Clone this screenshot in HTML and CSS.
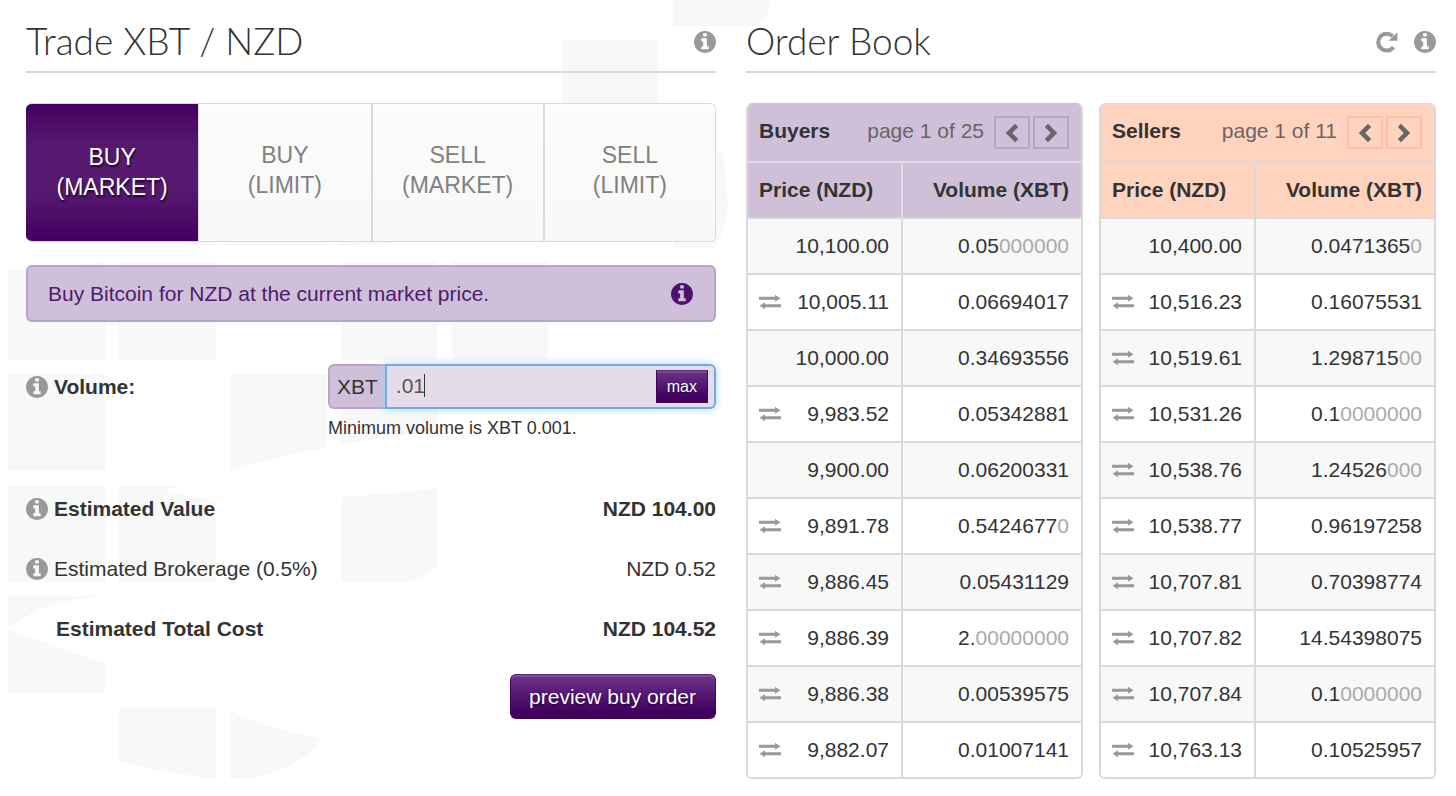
FILE: index.html
```html
<!DOCTYPE html>
<html lang="en">
<head>
<meta charset="utf-8">
<meta name="viewport" content="width=device-width, initial-scale=1">
<title>Trade XBT / NZD</title>
<link rel="stylesheet" href="styles.css">
</head>
<body>
<svg class="sprite" aria-hidden="true">
  <symbol id="info" viewBox="0 128 1536 1536"><path d="M1024 1376v-160q0-14-9-23t-23-9h-96V672q0-14-9-23t-23-9H544q-14 0-23 9t-9 23v160q0 14 9 23t23 9h96v320h-96q-14 0-23 9t-9 23v160q0 14 9 23t23 9h448q14 0 23-9t9-23zm-128-896V320q0-14-9-23t-23-9H672q-14 0-23 9t-9 23v160q0 14 9 23t23 9h192q14 0 23-9t9-23zm640 416q0 209-103 385.5T1153.5 1561 768 1664t-385.5-103T103 1281.5 0 896t103-385.5T382.5 231 768 128t385.5 103T1433 510.5 1536 896z"/></symbol>
  <symbol id="reload" viewBox="0 0 22 22"><path d="M17.4 16.2A8.4 8.4 0 1 1 16.6 5.2" fill="none" stroke="#999" stroke-width="4"/><path d="M21.4 1.2v8.6h-9z"/></symbol>
  <symbol id="swap" viewBox="0 0 22 16"><path d="M0 2.8h16V.8l5.5 3.5L16 7.8v-2H0zM22 10.2H6v-2L.5 11.7 6 15.2v-2h16z"/></symbol>
  <symbol id="prev" viewBox="0 0 14 20"><path d="M10 0.8 13.2 4 7.2 10l6 6L10 19.2.8 10z"/></symbol>
  <symbol id="next" viewBox="0 0 14 20"><path d="M4 .8.8 4l6 6-6 6L4 19.2l9.2-9.2z"/></symbol>
</svg>

<svg class="backdrop" width="780" height="796" viewBox="0 0 780 796" aria-hidden="true">
  <path d="M673 0h97q0 16-12 26h-85z"/>
  <path d="M562 40h96v96h-96z"/>
  <path d="M119 151h97v94h-97zM230 151h97v94h-97zM341 151h70v89q-30 5-70 5zM673 151h50l5 54q-2 24-13 43h-42z"/>
  <path d="M8 271l97-9v98H8zM119 262h97v98h-97zM341 262h96v98h-96zM452 262h96v98h-96z"/>
  <path d="M8 374h97v97H8zM230 374h97v73q-50 9-97 24zM341 374h96v58q-50 4-96 13z"/>
  <path d="M8 486h97v96H8zM119 486h65q-12 1-20 5l52 10v81h-97zM341 497q50-3 96-9v79q-14 12-34 15h-62z"/>
  <path d="M8 596h97q-60 4-90 28l-7 3zM8 629l97 35v29H8z"/>
  <path d="M119 708h97v71q-50-6-97-18zM230 711q46 21 92 27-30 41-92 41z"/>
</svg>

<main class="page">
  <section class="panel">
    <header class="panel-head">
      <h1>Trade XBT / NZD</h1>
      <button class="icon-btn" type="button" aria-label="About trading"><svg class="icon"><use href="#info"/></svg></button>
    </header>

    <div class="tabs">
      <button class="tab tab-active" type="button"><span>BUY<br>(MARKET)</span></button>
      <button class="tab" type="button"><span>BUY<br>(LIMIT)</span></button>
      <button class="tab" type="button"><span>SELL<br>(MARKET)</span></button>
      <button class="tab" type="button"><span>SELL<br>(LIMIT)</span></button>
    </div>

    <div class="notice">
      <span>Buy Bitcoin for NZD at the current market price.</span>
      <svg class="icon"><use href="#info"/></svg>
    </div>

    <form class="order">
      <div class="field">
        <div class="field-name">
          <svg class="icon"><use href="#info"/></svg>
          <label for="volume">Volume:</label>
        </div>
        <div class="field-body">
          <div class="input-group">
            <span class="addon">XBT</span>
            <div class="input-wrap">
              <input id="volume" type="text" value=".01" aria-describedby="volume-help">
              <span class="caret"></span>
              <button class="btn btn-small" type="button">max</button>
            </div>
          </div>
          <p class="help" id="volume-help">Minimum volume is XBT 0.001.</p>
        </div>
      </div>

      <div class="totals">
        <div class="total strong"><svg class="icon"><use href="#info"/></svg><span>Estimated Value</span><span class="amount">NZD 104.00</span></div>
        <div class="total"><svg class="icon"><use href="#info"/></svg><span>Estimated Brokerage (0.5%)</span><span class="amount">NZD 0.52</span></div>
        <div class="total strong total-final"><span>Estimated Total Cost</span><span class="amount">NZD 104.52</span></div>
      </div>

      <div class="actions"><button class="btn" type="button">preview buy order</button></div>
    </form>
  </section>

  <section class="panel">
    <header class="panel-head">
      <h1>Order Book</h1>
      <button class="icon-btn" type="button" aria-label="Reload"><svg class="icon"><use href="#reload"/></svg></button>
      <button class="icon-btn" type="button" aria-label="About the order book"><svg class="icon"><use href="#info"/></svg></button>
    </header>

    <div class="books">
      <div class="book buyers">
        <div class="book-head">
          <h2>Buyers</h2>
          <span class="pages">page 1 of 25</span>
          <div class="pager">
            <button type="button" aria-label="Previous page"><svg><use href="#prev"/></svg></button>
            <button type="button" aria-label="Next page"><svg><use href="#next"/></svg></button>
          </div>
        </div>
        <table>
          <thead><tr><th class="price">Price (NZD)</th><th>Volume (XBT)</th></tr></thead>
          <tbody>
            <tr><td>10,100.00</td><td>0.05<i>000000</i></td></tr>
            <tr><td><svg class="swap"><use href="#swap"/></svg>10,005.11</td><td>0.06694017</td></tr>
            <tr><td>10,000.00</td><td>0.34693556</td></tr>
            <tr><td><svg class="swap"><use href="#swap"/></svg>9,983.52</td><td>0.05342881</td></tr>
            <tr><td>9,900.00</td><td>0.06200331</td></tr>
            <tr><td><svg class="swap"><use href="#swap"/></svg>9,891.78</td><td>0.5424677<i>0</i></td></tr>
            <tr><td><svg class="swap"><use href="#swap"/></svg>9,886.45</td><td>0.05431129</td></tr>
            <tr><td><svg class="swap"><use href="#swap"/></svg>9,886.39</td><td>2.<i>00000000</i></td></tr>
            <tr><td><svg class="swap"><use href="#swap"/></svg>9,886.38</td><td>0.00539575</td></tr>
            <tr><td><svg class="swap"><use href="#swap"/></svg>9,882.07</td><td>0.01007141</td></tr>
          </tbody>
        </table>
      </div>

      <div class="book sellers">
        <div class="book-head">
          <h2>Sellers</h2>
          <span class="pages">page 1 of 11</span>
          <div class="pager">
            <button type="button" aria-label="Previous page"><svg><use href="#prev"/></svg></button>
            <button type="button" aria-label="Next page"><svg><use href="#next"/></svg></button>
          </div>
        </div>
        <table>
          <thead><tr><th class="price">Price (NZD)</th><th>Volume (XBT)</th></tr></thead>
          <tbody>
            <tr><td>10,400.00</td><td>0.0471365<i>0</i></td></tr>
            <tr><td><svg class="swap"><use href="#swap"/></svg>10,516.23</td><td>0.16075531</td></tr>
            <tr><td><svg class="swap"><use href="#swap"/></svg>10,519.61</td><td>1.298715<i>00</i></td></tr>
            <tr><td><svg class="swap"><use href="#swap"/></svg>10,531.26</td><td>0.1<i>0000000</i></td></tr>
            <tr><td><svg class="swap"><use href="#swap"/></svg>10,538.76</td><td>1.24526<i>000</i></td></tr>
            <tr><td><svg class="swap"><use href="#swap"/></svg>10,538.77</td><td>0.96197258</td></tr>
            <tr><td><svg class="swap"><use href="#swap"/></svg>10,707.81</td><td>0.70398774</td></tr>
            <tr><td><svg class="swap"><use href="#swap"/></svg>10,707.82</td><td>14.54398075</td></tr>
            <tr><td><svg class="swap"><use href="#swap"/></svg>10,707.84</td><td>0.1<i>0000000</i></td></tr>
            <tr><td><svg class="swap"><use href="#swap"/></svg>10,763.13</td><td>0.10525957</td></tr>
          </tbody>
        </table>
      </div>
    </div>
  </section>
</main>
</body>
</html>
```
FILE: styles.css
```css
* { box-sizing: border-box; }

body {
  margin: 0;
  background: #fff;
  color: #333;
  font: 21px/30px "Liberation Sans", Arial, sans-serif;
}

button, input { font: inherit; color: inherit; margin: 0; }
h1, h2, p { margin: 0; }

.sprite { position: absolute; width: 0; height: 0; }
.backdrop { position: absolute; top: 0; left: 0; z-index: -1; fill: #f8f8f8; }

.page {
  display: grid;
  grid-template-columns: repeat(2, minmax(0, 1fr));
  gap: 30px;
  padding: 18px 20px 0 26px;
}

.icon { flex: none; width: 22px; height: 22px; fill: #999; }

.panel-head {
  display: flex;
  align-items: center;
  gap: 16px;
  padding-bottom: 5px;
  margin-bottom: 30px;
  border-bottom: 2px solid #d9d9d9;
}
.panel-head h1 {
  flex: 1;
  padding-bottom: 2px;
  font: 300 37px/46px Lato, sans-serif;
}
.icon-btn { display: flex; padding: 0; border: 0; background: none; }

.tabs {
  display: grid;
  grid-template-columns: repeat(4, 1fr);
  height: 139px;
  border: 1px solid #d9d9d9;
  border-left: 0;
  border-radius: 6px;
  overflow: hidden;
}
.tab {
  padding: 0 0 6px;
  border: 0;
  border-left: 2px solid #d9d9d9;
  background: linear-gradient(#fcfcfb, #f8f8f8);
  color: #808080;
  font-size: 23px;
}
.tab:nth-child(2) { border-left-width: 1px; }
.tab-active {
  padding: 0 0 2px;
  border: 0;
  margin: -1px 0;
  background: linear-gradient(#430060, #571a70 32%, #571a70 62%, #430060);
  color: #fff;
  text-shadow: 1px 2px 2px #1c0028;
}

.notice {
  display: flex;
  align-items: center;
  justify-content: space-between;
  margin-top: 23px;
  padding: 12px 21px 11px 20px;
  border: 2px solid #baa3ca;
  border-radius: 6px;
  background: #cfbfd9;
  color: #4d1b6d;
}
.notice .icon { fill: #4d0f70; }

.field {
  display: grid;
  grid-template-columns: 302px minmax(0, 1fr);
  margin-top: 42px;
}
.field-name { display: flex; align-items: center; gap: 6px; height: 45px; font-weight: bold; }
.input-group { display: flex; height: 45px; }
.addon {
  display: flex;
  align-items: center;
  padding: 0 7px;
  border: 2px solid #baa3ca;
  border-right: 0;
  border-radius: 6px 0 0 6px;
  background: #cfbfd9;
}
.input-wrap { position: relative; flex: 1; display: flex; }
.input-wrap input {
  width: 100%;
  padding: 0 64px 2px 9px;
  border: 2px solid #71ace0;
  border-radius: 0 6px 6px 0;
  outline: 0;
  background: #e5dcea;
  color: #555;
  box-shadow: 0 0 8px #a4d4f8;
}
.caret { position: absolute; top: 10px; left: 39px; width: 1px; height: 23px; background: #333; }
.help { margin-top: 4px; font-size: 18px; line-height: 30px; }

.btn {
  padding: 7px 19px 6px 18px;
  border: 1px solid #3f0657;
  border-top-color: #5c2a78;
  border-radius: 6px;
  background: linear-gradient(#6b358a, #430060 85%);
  box-shadow: inset 0 2px 0 #7b4a98;
  color: #fff;
  text-shadow: 0 1px 2px #220033;
}
.btn-small {
  position: absolute;
  top: 6px;
  right: 8px;
  height: 33px;
  padding: 0 10px;
  border-radius: 0;
  font-size: 16px;
  line-height: 30px;
}

.totals { margin-top: 36px; }
.total { display: flex; align-items: center; gap: 6px; height: 60px; }
.total-final { padding-left: 30px; }
.strong { font-weight: bold; }
.amount { margin-left: auto; }

.actions { display: flex; justify-content: flex-end; margin-top: 15px; }

.books { display: grid; grid-template-columns: repeat(2, minmax(0, 1fr)); gap: 16px; }
.book {
  border: 2px solid #d9d9d9;
  border-top-width: 1px;
  border-radius: 6px;
  overflow: hidden;
}
.buyers { --tint: #cfbfd9; --edge: #baa3ca; --rule: #e2dbe6; border-top-color: #cfbfd9; }
.sellers { --tint: #ffd3be; --edge: #ffbfa8; --rule: #ddd9d9; border-top-color: #f0d3c6; }

.book-head {
  display: flex;
  align-items: center;
  height: 57px;
  padding: 0 12px 3px 11px;
  background: var(--tint);
}
.book-head h2 { font-size: 21px; }
.pages { margin-left: auto; color: #666; }
.pager { display: flex; gap: 3px; margin-left: 10px; padding-top: 3px; }
.pager button {
  display: grid;
  place-items: center;
  width: 36px;
  height: 33px;
  padding: 0;
  border: 2px solid var(--edge);
  background: none;
}
.pager svg { width: 14px; height: 20px; fill: #666; }

table { width: 100%; table-layout: fixed; border-collapse: separate; border-spacing: 0; }
th, td {
  height: 56px;
  padding: 0 12px 0 11px;
  border-top: 2px solid #d9d9d9;
  text-align: right;
}
th { background: var(--tint); border-color: var(--rule); }
th + th, td + td { border-left: 2px solid #d9d9d9; }
th + th { border-left-color: var(--rule); }
.price { width: 153px; text-align: left; }
tbody tr { background: #fff; }
tbody tr:nth-child(odd) { background: #f8f8f8; }
td i { color: #aaa; font-style: normal; }
.swap { float: left; width: 22px; height: 16px; margin-top: 7px; fill: #999; }
```
